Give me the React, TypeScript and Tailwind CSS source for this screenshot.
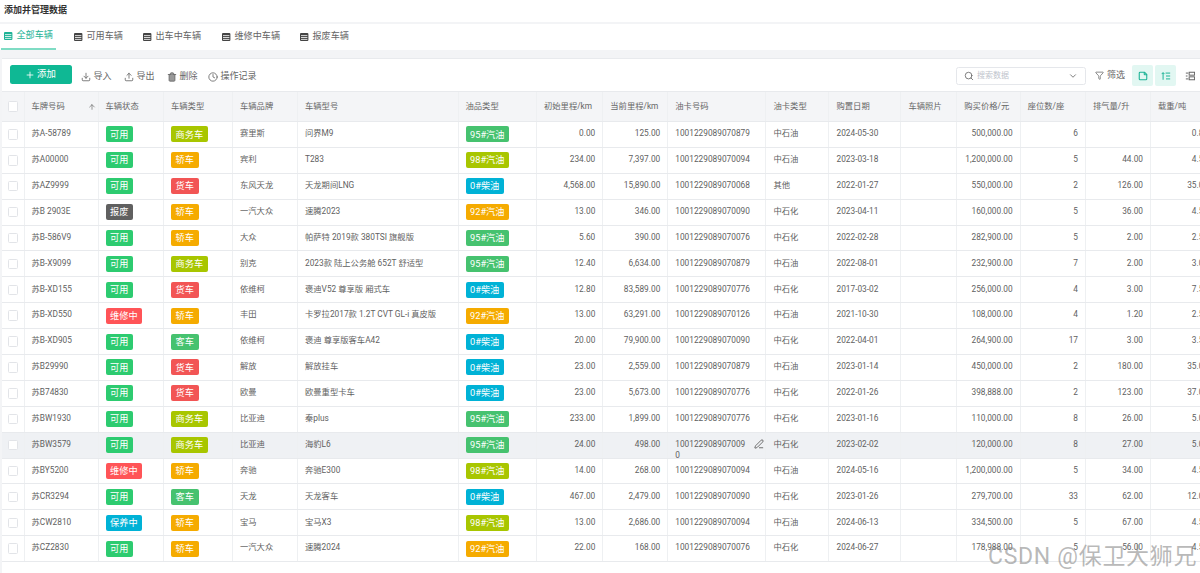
import { ArrowUp, ChevronDown, Clock, Download, Funnel, PenLine, Plus, Search, StickyNote, Trash2, Upload } from "lucide-react";

const GRID_COLS =
  "grid grid-cols-[22.5px_74px_65.5px_69px_65px_160.5px_78.5px_66.3px_65px_98.2px_63px_72px_55.8px_63.4px_65.3px_65px_65px]";

const CELL = "flex items-center overflow-hidden border-r border-[#eef0f2] whitespace-nowrap";

const TAG_STYLES: Record<string, string> = {
  可用: "bg-[#2dcb70]",
  报废: "bg-[#606060]",
  维修中: "bg-[#ff5457]",
  保养中: "bg-[#00b2d6]",
  商务车: "bg-[#a8c600]",
  轿车: "bg-[#f5ab00]",
  货车: "bg-[#f25555]",
  客车: "bg-[#46c26f]",
  "95#汽油": "bg-[#46c26f]",
  "98#汽油": "bg-[#a8c600]",
  "92#汽油": "bg-[#f5ab00]",
  "0#柴油": "bg-[#00b2d6]",
};

const HEADERS = [
  "车牌号码",
  "车辆状态",
  "车辆类型",
  "车辆品牌",
  "车辆型号",
  "油品类型",
  "初始里程/km",
  "当前里程/km",
  "油卡号码",
  "油卡类型",
  "购置日期",
  "车辆照片",
  "购买价格/元",
  "座位数/座",
  "排气量/升",
  "载重/吨",
];

const CARD_PREFIX = "1001229089070";

// plate, status, type, brand, model, fuel, start km, current km, card suffix, card type, date, price, seats, cc, load
const ROWS = [
  ["苏A-58789", "可用", "商务车", "赛里斯", "问界M9", "95#汽油", "0.00", "125.00", "879", "中石油", "2024-05-30", "500,000.00", "6", "", "0.80"],
  ["苏A00000", "可用", "轿车", "宾利", "T283", "98#汽油", "234.00", "7,397.00", "094", "中石油", "2023-03-18", "1,200,000.00", "5", "44.00", "4.50"],
  ["苏AZ9999", "可用", "货车", "东风天龙", "天龙期间LNG", "0#柴油", "4,568.00", "15,890.00", "068", "其他", "2022-01-27", "550,000.00", "2", "126.00", "35.00"],
  ["苏B 2903E", "报废", "轿车", "一汽大众", "速腾2023", "92#汽油", "13.00", "346.00", "090", "中石化", "2023-04-11", "160,000.00", "5", "36.00", "4.50"],
  ["苏B-586V9", "可用", "轿车", "大众", "帕萨特 2019款 380TSI 旗舰版", "95#汽油", "5.60", "390.00", "076", "中石化", "2022-02-28", "282,900.00", "5", "2.00", "2.50"],
  ["苏B-X9099", "可用", "商务车", "别克", "2023款 陆上公务舱 652T 舒适型", "95#汽油", "12.40", "6,634.00", "879", "中石油", "2022-08-01", "232,900.00", "7", "2.00", "3.00"],
  ["苏B-XD155", "可用", "货车", "依维柯", "褒迪V52 尊享版 厢式车", "0#柴油", "12.80", "83,589.00", "776", "中石化", "2017-03-02", "256,000.00", "4", "3.00", "7.50"],
  ["苏B-XD550", "维修中", "轿车", "丰田", "卡罗拉2017款 1.2T CVT GL-i 真皮版", "92#汽油", "13.00", "63,291.00", "126", "中石油", "2021-10-30", "108,000.00", "4", "1.20", "2.50"],
  ["苏B-XD905", "可用", "客车", "依维柯", "褒迪 尊享版客车A42", "0#柴油", "20.00", "79,900.00", "090", "中石化", "2022-04-01", "264,900.00", "17", "3.00", "3.50"],
  ["苏B29990", "可用", "货车", "解放", "解放挂车", "0#柴油", "23.00", "2,559.00", "879", "中石油", "2023-01-14", "450,000.00", "2", "180.00", "35.00"],
  ["苏B74830", "可用", "货车", "欧曼", "欧曼重型卡车", "0#柴油", "23.00", "5,673.00", "776", "中石化", "2022-01-26", "398,888.00", "2", "123.00", "37.00"],
  ["苏BW1930", "可用", "商务车", "比亚迪", "秦plus", "95#汽油", "233.00", "1,899.00", "776", "中石化", "2023-01-16", "110,000.00", "8", "26.00", "5.00"],
  ["苏BW3579", "可用", "商务车", "比亚迪", "海豹L6", "95#汽油", "24.00", "498.00", "090", "中石化", "2023-02-02", "120,000.00", "8", "27.00", "5.00"],
  ["苏BY5200", "维修中", "轿车", "奔驰", "奔驰E300", "98#汽油", "14.00", "268.00", "094", "中石油", "2024-05-16", "1,200,000.00", "5", "34.00", "4.50"],
  ["苏CR3294", "可用", "客车", "天龙", "天龙客车", "0#柴油", "467.00", "2,479.00", "090", "中石化", "2023-01-26", "279,700.00", "33", "62.00", "12.00"],
  ["苏CW2810", "保养中", "轿车", "宝马", "宝马X3", "98#汽油", "13.00", "2,686.00", "094", "中石油", "2024-06-13", "334,500.00", "5", "67.00", "4.50"],
  ["苏CZ2830", "可用", "轿车", "一汽大众", "速腾2024", "92#汽油", "22.00", "168.00", "076", "中石化", "2024-06-27", "178,988.00", "5", "56.00", "4.50"],
];

const HOVER_ROW = 12;

const TABS = [
  { label: "全部车辆", width: "w-[55px]" },
  { label: "可用车辆", width: "w-[69px]" },
  { label: "出车中车辆", width: "w-[79px]" },
  { label: "维修中车辆", width: "w-[78px]" },
  { label: "报废车辆", width: "w-[60px]" },
];

const TableIcon = ({ className }: { className: string }) => (
  <svg viewBox="0 0 10 10" className={className} aria-hidden>
    <rect x="1" y="1" width="8.4" height="8" rx="1" fill="currentColor" />
    <path d="M2 3.6h6.4M2 5.5h6.4M2 7.4h6.4" stroke="#fff" strokeWidth="0.8" />
  </svg>
);

const SortLinesIcon = () => (
  <svg viewBox="0 0 12 12" className="h-[10px] w-[10px] text-[#1db396]" fill="none" stroke="currentColor" strokeWidth="1.2" aria-hidden>
    <path d="M2.5 10.5V2M.8 3.7 2.5 2l1.7 1.7M5.5 2.5h5.5M6 6h5M6 9.5h5" />
  </svg>
);

const DensityIcon = () => (
  <svg viewBox="0 0 12 12" className="h-[10px] w-[10px] text-[#666]" fill="none" stroke="currentColor" strokeWidth="1.2" aria-hidden>
    <path d="M1 2.5h3M1 6h2M1 9.5h3" />
    <rect x="5" y="1.5" width="6.5" height="3.5" />
    <rect x="5" y="7" width="6.5" height="3.5" />
  </svg>
);

const Checkbox = () => (
  <span className="h-[10.5px] w-[10.5px] rounded-[1.5px] border border-[#e2e4e8] bg-white" />
);

const Tag = ({ label }: { label: string }) => (
  <span className={`flex h-[16px] items-center rounded-[2px] px-[4.6px] text-[9.2px] text-white ${TAG_STYLES[label]}`}>
    {label}
  </span>
);

const ToolbarAction = ({ icon, label, className }: { icon: React.ReactNode; label: string; className: string }) => (
  <span className={`flex items-center gap-[3px] text-[9px] text-[#666] ${className}`}>
    {icon}
    {label}
  </span>
);

const TextCell = ({ children, right }: { children?: React.ReactNode; right?: boolean }) => (
  <div className={`${CELL} px-[7px] pb-[2px] ${right ? "justify-end" : ""}`}>{children}</div>
);

const App = () => {
  return (
    <div className="h-screen w-screen overflow-hidden bg-[#f3f4f6] text-[8.3px] text-[#5f5f5f] [font-family:Roboto,'Noto_Sans_CJK_SC',sans-serif]">
      <div className="flex h-[22px] items-center bg-white pl-[4px] text-[9px] font-bold text-[#333]">
        添加并管理数据
      </div>

      <div className="mt-[2px] flex h-[26px] bg-white">
        {TABS.map((tab, i) => (
          <div
            key={tab.label}
            className={`flex items-center gap-[3.5px] text-[9.1px] ${tab.width} ${
              i === 0 ? "ml-px border-b-2 border-[#7fdcc4] pl-[2px] text-[#1db396]" : "pl-[17px] text-[#666]"
            }`}
          >
            <TableIcon className={`h-[10px] w-[10px] shrink-0 ${i === 0 ? "text-[#1db396]" : "text-[#444]"}`} />
            <span className="whitespace-nowrap">{tab.label}</span>
          </div>
        ))}
      </div>

      <div className="mt-[8px] ml-[2px] h-[calc(100vh-58px)] border-t border-[#e8eaed] bg-white">
        <div className="flex h-[32px] items-center justify-between pr-[5px] pl-[7.5px]">
          <div className="flex items-center pb-px">
            <button className="flex h-[19.5px] w-[62px] items-center justify-center gap-[2px] rounded-[2.5px] bg-[#0fb894] text-[9.4px] text-white">
              <Plus size={10} />
              添加
            </button>
            <ToolbarAction className="mt-[5px] ml-[9px]" icon={<Download size={10} />} label="导入" />
            <ToolbarAction className="mt-[5px] ml-[12px]" icon={<Upload size={10} />} label="导出" />
            <ToolbarAction className="mt-[5px] ml-[12px]" icon={<Trash2 size={10} fill="#999" />} label="删除" />
            <ToolbarAction className="mt-[5px] ml-[10px]" icon={<Clock size={10} />} label="操作记录" />
          </div>
          <div className="flex items-center pt-px">
            <div className="flex h-[18px] w-[130px] items-center rounded-[2.5px] border border-[#e5e7eb] px-[7px] text-[8px] text-[#c0c4cc]">
              <Search size={10} className="text-[#666]" />
              <span className="ml-[3px] flex-1">搜索数据</span>
              <ChevronDown size={10} className="text-[#666]" />
            </div>
            <ToolbarAction className="ml-[9px] text-[9.2px]" icon={<Funnel size={9} />} label="筛选" />
            <span className="ml-[7px] flex h-[21px] w-[21px] items-center justify-center rounded-[2px] bg-[#e2f7f2]">
              <StickyNote size={10} strokeWidth={2.6} className="text-[#1db396]" />
            </span>
            <span className="ml-[2px] flex h-[21px] w-[21px] items-center justify-center rounded-[2px] bg-[#e2f7f2]">
              <SortLinesIcon />
            </span>
            <span className="ml-[8px] flex w-[11px] items-center justify-center">
              <DensityIcon />
            </span>
          </div>
        </div>

        <div className={`${GRID_COLS} h-[31px] border-y border-[#e8eaed] bg-[#f4f5f7] text-[#666]`}>
          <div className={`${CELL} justify-center`}>
            <Checkbox />
          </div>
          {HEADERS.map((header, i) => (
            <div key={header} className={`${CELL} justify-between px-[7px]`}>
              {header}
              {i === 0 && <ArrowUp size={8} className="mr-[-5px] text-[#666]" />}
            </div>
          ))}
        </div>

        {ROWS.map((row, i) => {
          const [plate, status, type, brand, model, fuel, startKm, currentKm, card, cardType, date, price, seats, cc, load] = row;
          const isHover = i === HOVER_ROW;
          return (
            <div
              key={plate}
              className={`${GRID_COLS} h-[25.9px] border-b border-[#e8eaed] ${isHover ? "bg-[#eff1f4]" : "bg-white"}`}
            >
              <div className={`${CELL} justify-center`}>
                <Checkbox />
              </div>
              <TextCell>{plate}</TextCell>
              <div className={`${CELL} px-[7px]`}>
                <Tag label={status} />
              </div>
              <div className={`${CELL} px-[7px]`}>
                <Tag label={type} />
              </div>
              <TextCell>{brand}</TextCell>
              <TextCell>{model}</TextCell>
              <div className={`${CELL} px-[7px]`}>
                <Tag label={fuel} />
              </div>
              <TextCell right>{startKm}</TextCell>
              <TextCell right>{currentKm}</TextCell>
              {isHover ? (
                <TextCell>
                  <span className="h-[11px] leading-[11px]">
                    100122908907009
                    <br />0
                  </span>
                  <PenLine size={10} className="ml-[9px] shrink-0 text-[#555]" />
                </TextCell>
              ) : (
                <TextCell>
                  {CARD_PREFIX}
                  {card}
                </TextCell>
              )}
              <TextCell>{cardType}</TextCell>
              <TextCell>{date}</TextCell>
              <TextCell />
              <TextCell right>{price}</TextCell>
              <TextCell right>{seats}</TextCell>
              <TextCell right>{cc}</TextCell>
              <TextCell right>{load}</TextCell>
            </div>
          );
        })}
      </div>

      <div className="absolute top-[540px] left-[988px] text-[23px] tracking-[0.7px] whitespace-nowrap text-[#8a8a8a]/60">
        CSDN @保卫大狮兄
      </div>
    </div>
  );
};

export default App;
